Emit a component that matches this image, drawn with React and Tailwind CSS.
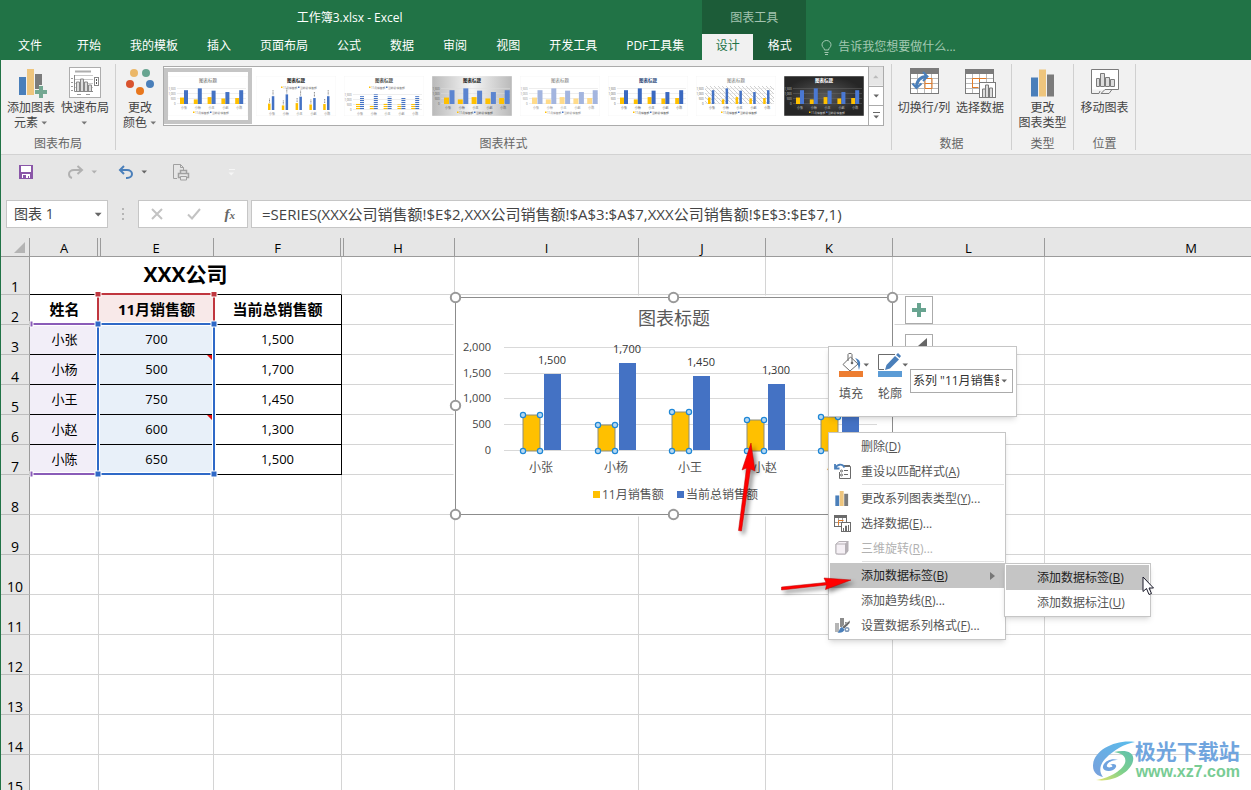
import { useState } from "react";

const people = [
  { name: "小张", nov: 700, total: 1500 },
  { name: "小杨", nov: 500, total: 1700 },
  { name: "小王", nov: 750, total: 1450 },
  { name: "小赵", nov: 600, total: 1300 },
  { name: "小陈", nov: 650, total: 1500 },
];

const tabs = ["开始", "我的模板", "插入", "页面布局", "公式", "数据", "审阅", "视图", "开发工具", "PDF工具集"];

const columns = [
  { name: "A", width: "w-[69px]", hiddenAfter: true },
  { name: "E", width: "w-[115px]" },
  { name: "F", width: "w-[128px]", hiddenAfter: true },
  { name: "H", width: "w-[113px]" },
  { name: "I", width: "w-[184px]" },
  { name: "J", width: "w-[127px]" },
  { name: "K", width: "w-[127px]" },
  { name: "L", width: "w-[152px]" },
  { name: "M", width: "w-[293px]" },
];

const thumbs = [
  { id: 1, title: "#666", text: "#777", a: "#ffc000", b: "#4472c4", bg: "#fff" },
  { id: 2, title: "#222", text: "#777", a: "#ffc000", b: "#4472c4", bg: "#fff", bold: true, top: true, tall: true, narrow: true },
  { id: 3, title: "#555", text: "#777", a: "url(#stripeA)", b: "url(#stripeB)", bg: "#fff", bold: true, top: true },
  { id: 4, title: "#222", text: "#555", a: "#ffc000", b: "#5b84d0", bg: "url(#silver)", bold: true, wide: true },
  { id: 5, title: "#777", text: "#888", a: "#ffdb8a", b: "#a3b5df", bg: "#fff", wide: true },
  { id: 6, title: "#2f4a7c", text: "#555", a: "#ffc000", b: "#3a68c0", bg: "#fff", bold: true },
  { id: 7, title: "#777", text: "#555", a: "#ffc000", b: "#4472c4", bg: "#fff", hatch: true, narrow: true },
  { id: 8, title: "#fff", text: "#ccc", a: "#ffc000", b: "#4a78d2", bg: "url(#coal)", bold: true },
];

function Caret({ className = "text-[#666]" }) {
  return (
    <svg width="7" height="4" viewBox="0 0 7 4" className={`inline-block shrink-0 ${className}`}>
      <path d="M0.5 0.5h5.5L3.25 3.5z" fill="currentColor" />
    </svg>
  );
}

function BarsIcon({ className }) {
  return (
    <svg viewBox="0 0 24 27" className={className}>
      <rect x="0" y="8" width="7" height="19" fill="#4a7fba" />
      <rect x="8" y="0" width="7" height="27" fill="#eec57d" />
      <rect x="16" y="5" width="7" height="22" fill="#7b7b7b" />
    </svg>
  );
}

function AddElementIcon() {
  return (
    <svg width="32" height="32" viewBox="0 0 32 32">
      <rect x="4" y="10" width="7" height="18" fill="#4a7fba" />
      <rect x="12" y="2" width="7" height="26" fill="#eec57d" />
      <path d="M20 7h7v11h-3v4h-4z" fill="#7b7b7b" />
      <path d="M24 19h4v4h4v4h-4v4h-4v-4h-4v-4h4z" fill="#74a892" />
    </svg>
  );
}

function QuickLayoutIcon() {
  return (
    <svg width="32" height="32" viewBox="0 0 32 32">
      <rect x="0.5" y="0.5" width="31" height="30" fill="#fff" stroke="#adadad" />
      <path d="M6 4.5h16" stroke="#adadad" strokeWidth="2" />
      <path d="M5 8.5h19M5 12.5h19M5 16.5h19M5 20.5h19" stroke="#c9c9c9" />
      <path d="M2 11.5h2M2 15.5h2M2 19.5h2M2 23.5h2M8 27.5h4M17 27.5h4" stroke="#999" />
      <path d="M5.5 8v16.5H24" stroke="#888" fill="none" />
      <path d="M7.5 24v-9h3v9M11.5 24v-12h3v12M15.5 24v-9h3v9M19.5 24v-6h3v6" fill="#ddd" stroke="#888" />
      <rect x="25.5" y="10.5" width="4" height="8" fill="#fff" stroke="#888" />
      <path d="M27 13h1M27 16h1" stroke="#555" strokeWidth="2" />
    </svg>
  );
}

function ColorsIcon() {
  return (
    <svg width="32" height="32" viewBox="0 0 32 32">
      <circle cx="10" cy="6" r="4" fill="#ebb768" />
      <circle cx="22" cy="6" r="4" fill="#68a490" />
      <circle cx="6" cy="17" r="4" fill="#d9532e" />
      <circle cx="26" cy="17" r="4" fill="#4a7fba" />
      <circle cx="16" cy="24" r="4" fill="#e8771d" />
    </svg>
  );
}

function SwitchIcon() {
  return (
    <svg width="32" height="32" viewBox="0 0 32 32">
      <rect x="2.5" y="2.5" width="28" height="24" fill="#fff" stroke="#7b7b7b" />
      <path d="M2 1h29v6H2z" fill="#7b7b7b" />
      <path d="M9.5 7v19M16.5 7v19M23.5 7v19M3 11.5h27M3 16.5h27M3 21.5h27" stroke="#b9b9b9" />
      <path d="M17 11.5h7v10h-7zM17 16.5h7" fill="none" stroke="#e07b29" />
      <path d="M8.5 20c0-6 4-10.5 10-10.5" fill="none" stroke="#4a7fba" strokeWidth="3" />
      <path d="M15 5l4.5 4.5L15 14M4.5 16.5l4 4.5 5-4.5" fill="none" stroke="#4a7fba" strokeWidth="2" />
    </svg>
  );
}

function SelectDataIcon() {
  return (
    <svg width="32" height="32" viewBox="0 0 32 32">
      <rect x="1.5" y="3.5" width="28" height="23" fill="#fff" stroke="#7b7b7b" />
      <path d="M1 2h29v5H1z" fill="#7b7b7b" />
      <path d="M8.5 7v19M15.5 7v19M22.5 7v19M2 11.5h27M2 16.5h27M2 21.5h27" stroke="#b9b9b9" />
      <path d="M8.5 21v-9.5h14M8.5 20.5h6M15.5 12v4" fill="none" stroke="#e07b29" />
      <rect x="15.5" y="15.5" width="16" height="15" fill="#fff" stroke="#7b7b7b" />
      <path d="M18.5 30v-8h3v8M21.5 30v-12h3v12M25.5 30v-9h3v9" fill="#ddd" stroke="#7b7b7b" />
    </svg>
  );
}

function SelectDataSmallIcon() {
  return (
    <svg width="17" height="17" viewBox="0 0 17 17">
      <rect x="0.5" y="1.5" width="12" height="10" fill="#fff" stroke="#6b6b6b" />
      <path d="M0 0h13v3H0z" fill="#6b6b6b" />
      <path d="M4.5 3v8M8.5 3v8M1 7.5h11" stroke="#999" />
      <path d="M4.5 10V5.5h5" fill="none" stroke="#e07b29" />
      <rect x="7.5" y="7.5" width="9" height="9" fill="#fff" stroke="#6b6b6b" />
      <path d="M9.5 16v-3M11.5 16v-5h1v5M14.5 16v-6" fill="none" stroke="#6b6b6b" />
    </svg>
  );
}

function MoveChartIcon() {
  return (
    <svg width="32" height="32" viewBox="0 0 32 32">
      <path d="M2.5 26.5v-24h27v20h-27z" fill="#fff" />
      <path d="M10 26.5H2.5v-24h27v20H22M10 26.5l1-2.5M12 26.5l4-4h7l-3 4z" fill="none" stroke="#7b7b7b" />
      <path d="M7.5 19.5v-8h3v8zM11.5 19.5v-13h4v13zM16.5 19.5v-9h4v9zM21.5 19.5v-7h4v7z" fill="#ddd" stroke="#7b7b7b" />
    </svg>
  );
}

function Thumbnail({ style }) {
  const base = style.top ? 34 : 28;
  const scale = 0.0092;
  const barWidth = style.wide ? 5 : style.narrow ? 2.5 : 4;
  return (
    <svg width="80" height="40" viewBox="0 0 80 40">
      <defs>
        <linearGradient id="silver">
          <stop offset="0" stopColor="#b9b9b9" />
          <stop offset="0.5" stopColor="#f6f6f6" />
          <stop offset="1" stopColor="#b9b9b9" />
        </linearGradient>
        <radialGradient id="coal">
          <stop offset="0" stopColor="#585858" />
          <stop offset="1" stopColor="#262626" />
        </radialGradient>
        <pattern id="stripeA" width="4" height="2" patternUnits="userSpaceOnUse">
          <path d="M0 0.5h4" stroke="#ffc000" strokeWidth="1.2" />
        </pattern>
        <pattern id="stripeB" width="4" height="2" patternUnits="userSpaceOnUse">
          <path d="M0 0.5h4" stroke="#4472c4" strokeWidth="1.2" />
        </pattern>
        <pattern id="hatch" width="4" height="4" patternUnits="userSpaceOnUse">
          <path d="M0 0l4 4" stroke="#bbb" strokeWidth="0.7" />
        </pattern>
      </defs>
      <rect width="80" height="40" fill={style.bg} stroke="#eee" strokeWidth="0.5" />
      <text x="40" y="6" textAnchor="middle" fontSize="4.5" fontWeight={style.bold ? 700 : 400} fill={style.title}>
        图表标题
      </text>
      {style.hatch && <rect x="9" y="10" width="69" height="18" fill="url(#hatch)" />}
      {!style.tall && [0, 1, 2, 3].map((n) => (
        <path key={n} d={`M9 ${base - n * 5 - 0.5}h69`} stroke={style.id === 8 ? "#666" : "#ddd"} strokeWidth="0.5" />
      ))}
      {!style.tall && ["0", "500", "1,000", "1,500"].map((label, n) => (
        <text key={label} x="7.5" y={base - n * 5 + 1} textAnchor="end" fontSize="2.8" fill={style.text}>{label}</text>
      ))}
      {people.map((p, i) => {
        const x = 12 + i * 13.8;
        const second = x + (style.narrow ? 3.8 : barWidth + (style.wide ? 0.5 : 0));
        return (
          <g key={p.name}>
            <rect x={x} y={base - p.nov * scale} width={barWidth} height={p.nov * scale} fill={style.a} />
            <rect x={second} y={base - p.total * scale} width={barWidth} height={p.total * scale} fill={style.b} />
            <text x={x + 4} y={base + 4.5} textAnchor="middle" fontSize="3" fill={style.text}>{p.name}</text>
            {style.tall && <path d={`M${x + 1.5} ${base - p.nov * scale - 5}v4M${x + 5} ${base - p.total * scale - 6}v5`} stroke="#888" strokeWidth="1" strokeDasharray="1 0.5" />}
          </g>
        );
      })}
      <g fontSize="2.8" fill={style.text} transform={style.top ? "translate(0 -25)" : undefined}>
        <rect x="25" y="35.5" width="1.5" height="1.5" fill="#ffc000" />
        <text x="27" y="37.5">11月销售额</text>
        <rect x="42" y="35.5" width="1.5" height="1.5" fill="#4472c4" />
        <text x="44" y="37.5">当前总销售额</text>
      </g>
    </svg>
  );
}

function RibbonGroup({ label, children, className = "" }) {
  return (
    <section className="my-1 flex shrink-0 flex-col border-r border-[#d0d0d0]">
      <div className={`flex flex-1 justify-center ${className}`}>{children}</div>
      <h2 className="h-3 text-center text-xs leading-3 text-[#666]">{label}</h2>
    </section>
  );
}

function RibbonButton({ icon, width = "w-[54px]", children }) {
  return (
    <button className={`flex h-[70px] flex-col items-center gap-px pt-[3px] text-xs leading-[15px] whitespace-nowrap text-[#444] hover:bg-[#d5d5d5] ${width}`}>
      {icon}
      <span>{children}</span>
    </button>
  );
}

function Header() {
  return (
    <header className="flex h-[60px] shrink-0 bg-[#217346] text-xs text-white">
      <div className="flex flex-col">
        <h1 className="h-9 text-center leading-9">工作簿3.xlsx - Excel</h1>
        <nav className="flex h-6 gap-px whitespace-nowrap">
          <button className="pr-5 pl-[17px] pb-1">文件</button>
          {tabs.map((tab) => (
            <button key={tab} className="px-[14px] pb-1">{tab}</button>
          ))}
        </nav>
      </div>
      <div className="ml-1 flex w-[104px] flex-col bg-[#1c5c38]">
        <p className="h-[34px] text-center leading-9 text-[#a3c3b0]">图表工具</p>
        <nav className="flex h-[26px]">
          <button className="w-[51px] bg-[#f1f1f1] pb-[2px] text-[#217346]">设计</button>
          <button className="flex-1 pb-[2px]">格式</button>
        </nav>
      </div>
      <label className="ml-[15px] flex items-center gap-[6px] self-end pb-[5px]">
        <svg width="11" height="15" viewBox="0 0 11 15" fill="none" stroke="#a3c9b2">
          <path d="M3.5 10C3.5 8 1 7.5 1 4.8A4.5 4.3 0 0 1 10 4.8C10 7.5 7.5 8 7.5 10zM3.5 12.5h4M4 14.5h3" />
        </svg>
        <input
          aria-label="告诉我您想要做什么"
          placeholder="告诉我您想要做什么..."
          className="h-4 w-[130px] bg-transparent outline-none placeholder:text-[#a3c9b2]"
        />
      </label>
    </header>
  );
}

function Ribbon() {
  const [selected, setSelected] = useState(1);
  return (
    <div className="flex h-[95px] shrink-0 border-b border-[#d2d2d2] bg-[#f1f1f1]">
      <RibbonGroup label="图表布局" className="px-[3px]">
        <RibbonButton icon={<AddElementIcon />}>
          添加图表
          <br />
          元素 <Caret className="mb-[2px] text-[#777]" />
        </RibbonButton>
        <RibbonButton icon={<QuickLayoutIcon />}>
          快速布局
          <br />
          <Caret className="mb-[2px] text-[#777]" />
        </RibbonButton>
      </RibbonGroup>
      <RibbonGroup label="图表样式" className="pr-[7px] pl-px">
        <RibbonButton icon={<ColorsIcon />} width="w-[46px]">
          <span className="block text-center">更改</span>
          颜色 <Caret className="mb-[2px] text-[#777]" />
        </RibbonButton>
        <div className="mt-[2px] flex h-[60px] border border-[#ababab] bg-white">
          {thumbs.map((style) => (
            <button
              key={style.id}
              aria-label={`样式 ${style.id}`}
              onClick={() => setSelected(style.id)}
              className={`my-px flex w-[88px] items-center justify-center border-4 ${selected === style.id ? "border-[#c5c5c5]" : "border-transparent"}`}
            >
              <Thumbnail style={style} />
            </button>
          ))}
          <div className="flex w-[15px] flex-col border-l border-[#ababab]">
            <button aria-label="向上" className="flex flex-1 rotate-180 items-center justify-center bg-[#e6e6e6]"><Caret className="text-[#bbb]" /></button>
            <button aria-label="向下" className="flex flex-1 items-center justify-center border-y border-[#ababab]"><Caret /></button>
            <button aria-label="其他" className="flex flex-1 flex-col items-center justify-center gap-[2px]">
              <span className="h-px w-[7px] bg-[#666]"></span>
              <Caret />
            </button>
          </div>
        </div>
      </RibbonGroup>
      <RibbonGroup label="数据" className="pr-[3px] pl-1">
        <RibbonButton icon={<SwitchIcon />} width="w-14">切换行/列</RibbonButton>
        <RibbonButton icon={<SelectDataIcon />} width="w-14">选择数据</RibbonButton>
      </RibbonGroup>
      <RibbonGroup label="类型" className="px-[3px]">
        <RibbonButton icon={<BarsIcon className="my-[2px] h-7 w-6" />} width="w-[55px]">
          <span className="block text-center">更改</span>
          图表类型
        </RibbonButton>
      </RibbonGroup>
      <RibbonGroup label="位置" className="px-[3px]">
        <RibbonButton icon={<MoveChartIcon />} width="w-[55px]">移动图表</RibbonButton>
      </RibbonGroup>
    </div>
  );
}

function QuickAccess() {
  return (
    <div className="flex h-[34px] shrink-0 items-center pl-[18px]">
      <button aria-label="保存">
        <svg width="14" height="14" viewBox="0 0 14 14">
          <path d="M0 0h14v14H0z" fill="#8a57a8" />
          <path d="M2 1h10v6H2zM3 9h8v4H3z" fill="#fff" />
          <path d="M4 10h3v3H4zM9 11h1v2H9z" fill="#8a57a8" />
        </svg>
      </button>
      <button aria-label="恢复" className="ml-[35px] flex items-center gap-[7px]">
        <svg width="16" height="14" viewBox="0 0 16 14" fill="none" stroke="#b1b1b1" strokeWidth="2">
          <path d="M9.5 1l4.5 4-4.5 4M14 5H6C3 5 1 7 1 9s1 3.500 3 4" />
        </svg>
        <Caret className="text-[#b1b1b1]" />
      </button>
      <button aria-label="撤消" className="ml-5 flex items-center gap-[7px]">
        <svg width="16" height="14" viewBox="0 0 16 14" fill="none" stroke="#4a7fba" strokeWidth="2">
          <path d="M6 1L2 5l4 4M2 5h7c3 0 5 2 5 4s-2 4-5 4H8" />
        </svg>
        <Caret />
      </button>
      <button aria-label="打印预览和打印" className="ml-[25px]">
        <svg width="17" height="17" viewBox="0 0 17 17" fill="none" stroke="#a0a0a0">
          <path d="M4 14.5H0.5v-14h7l3 3V6M7.5 0.5v3h3" />
          <path d="M7.5 9.5v-3h6v3M5.5 9.5h10v4h-10z" strokeWidth="1.5" />
          <path d="M7.5 12.5h6v3.5h-6z" fill="#e6e6e6" />
        </svg>
      </button>
      <button aria-label="自定义快速访问工具栏" className="ml-[38px] flex flex-col items-center gap-[2px]">
        <span className="h-px w-[6px] bg-[#f6f6f6]"></span>
        <Caret className="text-[#f6f6f6]" />
      </button>
    </div>
  );
}

function FormulaBar() {
  const [name, setName] = useState("图表 1");
  const [formula, setFormula] = useState("=SERIES(XXX公司销售额!$E$2,XXX公司销售额!$A$3:$A$7,XXX公司销售额!$E$3:$E$7,1)");
  return (
    <div className="flex h-[49px] shrink-0 pt-[11px] pb-[10px] pl-[5px]">
      <div className="flex w-[102px] items-center border border-[#c6c6c6] bg-white pr-1 pl-[7px]">
        <input
          aria-label="名称框"
          value={name}
          onChange={(e) => setName(e.target.value)}
          className="min-w-0 flex-1 text-sm text-[#444] outline-none"
        />
        <button aria-label="打开名称列表" className="flex"><Caret className="h-[5px] w-[9px] text-[#666]" /></button>
      </div>
      <div className="flex w-[30px] flex-col items-center justify-center gap-[3px]">
        <span className="h-[2px] w-[2px] bg-[#b5b5b5]"></span>
        <span className="h-[2px] w-[2px] bg-[#b5b5b5]"></span>
        <span className="h-[2px] w-[2px] bg-[#b5b5b5]"></span>
      </div>
      <div className="mr-[3px] flex w-[110px] items-center justify-around border border-[#c6c6c6] bg-white">
        <button aria-label="取消">
          <svg width="12" height="12" viewBox="0 0 12 12" stroke="#c3c3c3" strokeWidth="2"><path d="M1 1l10 10M11 1L1 11" /></svg>
        </button>
        <button aria-label="输入">
          <svg width="14" height="12" viewBox="0 0 14 12" fill="none" stroke="#c3c3c3" strokeWidth="2"><path d="M1 6.5l4 4L13 1" /></svg>
        </button>
        <button aria-label="插入函数" className="font-['Liberation_Serif',serif] text-[15px] leading-4 font-bold text-[#666] italic">
          f<span className="text-[11px]">x</span>
        </button>
      </div>
      <input
        aria-label="编辑栏"
        value={formula}
        onChange={(e) => setFormula(e.target.value)}
        className="min-w-0 flex-1 border border-r-0 border-[#c6c6c6] bg-white pl-[10px] text-[15px] text-[#444] outline-none"
      />
    </div>
  );
}

const corner = "border-r border-b border-[#9b9b9b]";
const rowHead = "border-r border-b border-r-[#9b9b9b] border-b-[#bdbdbd] bg-[#e6e6e6] p-0 align-bottom text-center font-normal text-sm leading-[15px]";
const blank = "border-r border-b border-[#d4d4d4] p-0";

function BlankCells({ count }) {
  return Array.from({ length: count }, (_, i) => <td key={i} className={blank}></td>);
}

function Grid() {
  return (
    <table className="w-[1337px] table-fixed border-separate border-spacing-0 text-black">
      <colgroup>
        <col className="w-[29px]" />
        {columns.map((c) => <col key={c.name} className={c.width} />)}
      </colgroup>
      <thead className="bg-[#e6e6e6]">
        <tr className="h-[19px]">
          <th className={`${corner} p-0`} aria-label="全选">
            <svg width="11" height="11" viewBox="0 0 11 11" className="mr-1 ml-auto"><path d="M11 0v11H0z" fill="#b4b4b4" /></svg>
          </th>
          {columns.map((c) => (
            <th key={c.name} className={`${corner} relative p-0 pt-[2px] text-[13px] leading-4 font-normal`}>
              {c.name}
              {c.hiddenAfter && <span className="absolute top-0 -right-[3px] bottom-0 z-10 w-1 border-x border-[#9b9b9b] bg-[#e6e6e6]"></span>}
            </th>
          ))}
        </tr>
      </thead>
      <tbody>
        <tr className="h-[38px]">
          <th className={rowHead}>1</th>
          <td colSpan={3} className="border-r border-b border-r-[#d4d4d4] border-b-black p-0 pb-1 text-center text-[21px] leading-7 font-bold">XXX公司</td>
          <BlankCells count={6} />
        </tr>
        <tr className="h-[30px] text-center text-[15px] leading-5 font-bold">
          <th className={rowHead}>2</th>
          <td className="border-b border-black p-0 pb-[2px]">姓名</td>
          <td className="border-b border-black bg-[#f8e9e9] p-0 pb-[2px]">11月销售额</td>
          <td className="border-r border-b border-black p-0 pb-[2px]">当前总销售额</td>
          <BlankCells count={6} />
        </tr>
        {people.map((p, i) => (
          <tr key={p.name} className="h-[30px] text-center text-[13px] leading-5">
            <th className={rowHead}>{i + 3}</th>
            <td className="border-b border-black bg-[#f2eef8] p-0 pb-[2px]">{p.name}</td>
            <td className="border-b border-black bg-[#e8f0f9] p-0 pb-[2px]">{p.nov}</td>
            <td className="border-r border-b border-black p-0 pb-[2px]">{p.total.toLocaleString("en-US")}</td>
            <BlankCells count={6} />
          </tr>
        ))}
        {[8, 9, 10, 11, 12, 13, 14, 15].map((n) => (
          <tr key={n} className="h-10">
            <th className={rowHead}>{n}</th>
            <BlankCells count={9} />
          </tr>
        ))}
      </tbody>
    </table>
  );
}

// coloured outlines around the ranges that feed the chart
function RangeOutlines() {
  return (
    <svg width="190" height="188" viewBox="0 0 190 188" className="pointer-events-none absolute top-[54px] left-7">
      <path d="M178 63h5v5zM178 123h5v5z" fill="#e01010" />
      <g fill="none" strokeWidth="2">
        <path d="M1 32h68M1 182h68" stroke="#fff" strokeWidth="4" />
        <path d="M1 32h68M1 182h68" stroke="#8a5cb8" />
        <path d="M69 31V2h116v29" stroke="#c0363f" />
        <rect x="69" y="32" width="116" height="150" stroke="#fff" strokeWidth="4" />
        <rect x="69" y="32" width="116" height="150" stroke="#2f69c7" />
      </g>
      <path d="M1 29h3v6H1zM1 179h3v6H1z" fill="#8a5cb8" stroke="#fff" />
      {[69, 185].map((x) => (
        <g key={x} stroke="#fff">
          <rect x={x - 3} y="-1" width="6" height="6" fill="#c0363f" />
          <rect x={x - 3} y="29" width="6" height="6" fill="#2f69c7" />
          <rect x={x - 3} y="179" width="6" height="6" fill="#2f69c7" />
        </g>
      ))}
    </svg>
  );
}

function Chart() {
  const base = 159.5;
  const scale = 0.0512;
  return (
    <svg width="450" height="230" viewBox="0 0 450 230" className="absolute top-[53px] left-[448px]" role="img" aria-label="图表标题">
      <rect x="6" y="6" width="438" height="218" fill="#fff" stroke="#fff" strokeWidth="3" />
      <rect x="6.5" y="6.5" width="437" height="217" fill="none" stroke="#8c8c8c" />
      <text x="225" y="34" textAnchor="middle" fontSize="18" fill="#595959">图表标题</text>
      {[0, 500, 1000, 1500, 2000].map((v) => {
        const y = Math.round(base - v * scale) - 0.5;
        return (
          <g key={v}>
            <path d={`M55 ${y}h373`} stroke="#d9d9d9" />
            <text x="42" y={y + 3} textAnchor="end" fontSize="11" fill="#444">{v.toLocaleString("en-US")}</text>
          </g>
        );
      })}
      {people.map((p, i) => {
        const x = Math.round(i * 74.6);
        const top = Math.round(base - p.nov * scale);
        const totalTop = Math.round(base - p.total * scale);
        return (
          <g key={p.name}>
            <rect x={x + 95} y={totalTop} width="17" height={159 - totalTop} fill="#4472c4" />
            <rect x={x + 74} y={top} width="17" height={160 - top} fill="#ffc000" stroke="#8d8d7a" />
            {[[74, top], [91, top], [74, 160], [91, 160]].map(([dx, y]) => (
              <circle key={`${dx}-${y}`} cx={x + dx} cy={y} r="2.6" fill="#b5d8f2" stroke="#1e87d6" strokeWidth="1.2" />
            ))}
            <text x={x + 103} y={totalTop - 10} textAnchor="middle" fontSize="11" fill="#333">{p.total.toLocaleString("en-US")}</text>
            <text x={x + 92} y="181" textAnchor="middle" fontSize="12" fill="#555">{p.name}</text>
          </g>
        );
      })}
      <g fontSize="12" fill="#555">
        <rect x="144" y="200" width="7" height="7" fill="#ffc000" />
        <text x="153" y="208">11月销售额</text>
        <rect x="228" y="200" width="7" height="7" fill="#4472c4" />
        <text x="237" y="208">当前总销售额</text>
      </g>
      {[[6, 6], [224, 6], [443, 6], [6, 114], [443, 114], [6, 223], [224, 223], [443, 223]].map(([x, y]) => (
        <circle key={`${x}-${y}`} cx={x + 0.5} cy={y + 0.5} r="4.7" fill="#fff" stroke="#999" strokeWidth="2" />
      ))}
    </svg>
  );
}

function ChartButtons() {
  return (
    <div className="absolute top-[58px] left-[904px] flex flex-col gap-[10px]">
      <button aria-label="图表元素" className="flex h-7 w-7 items-center justify-center border border-[#ababab] bg-white">
        <svg width="14" height="14" viewBox="0 0 14 14"><path d="M5 0h4v5h5v4H9v5H5V9H0V5h5z" fill="#68a490" /></svg>
      </button>
      <button aria-label="图表样式" className="flex h-7 w-7 items-center justify-center border border-[#ababab] bg-white">
        <svg width="18" height="20" viewBox="0 0 18 20"><path d="M17 0v8l-5 2-4-2z" fill="#666" /><path d="M7 9l3 3c-2 5-5 4-8 5 2-3 1-7 5-8z" fill="#4a7fba" /></svg>
      </button>
    </div>
  );
}

function MiniToolbar() {
  return (
    <div className="absolute top-[108px] left-[827px] flex h-[71px] w-[189px] border border-[#c6c6c6] bg-white pl-[10px] text-xs text-[#555] shadow-md">
      <button className="flex w-[31px] flex-col items-start pt-[5px]">
        <span className="flex items-center">
          <svg width="24" height="26" viewBox="1 0 24 26" className="shrink-0">
            <path d="M5 12.5L12.5 5l7.5 7-8 7z" fill="#fff" stroke="#6b6b6b" />
            <path d="M10 9V2.5C10 1 14 1 14 2.5V11" fill="none" stroke="#6b6b6b" />
            <circle cx="14" cy="11" r="1.3" fill="#6b6b6b" />
            <path d="M17 6c6 2 6 5 4 12-1-4-1-9-4-12z" fill="#4a7fba" />
            <path d="M1 19h24v6H1z" fill="#ed7d31" />
          </svg>
          <Caret />
        </span>
        <span className="mt-2">填充</span>
      </button>
      <button className="ml-2 flex w-[31px] flex-col items-start pt-[5px]">
        <span className="flex items-center">
          <svg width="24" height="26" viewBox="1 0 24 26" className="shrink-0">
            <path d="M7 17.5H1.5v-15H18" fill="none" stroke="#6b6b6b" />
            <path d="M8 18l1.5-5L18 4l4 3.5-9 9z" fill="#4a7fba" />
            <path d="M19 3l2-2 3 3-1.5 2z" fill="#4a7fba" />
            <path d="M1 19h24v6H1z" fill="#5b9bd5" />
          </svg>
          <Caret />
        </span>
        <span className="mt-2">轮廓</span>
      </button>
      <div className="relative mt-[22px] ml-px h-6 w-[103px] border border-[#ababab]">
        <select aria-label="图表元素" className="h-full w-[88px] appearance-none overflow-hidden pl-[2px] text-xs whitespace-nowrap text-[#333] outline-none">
          <option>系列 "11月销售额"</option>
          <option>系列 "当前总销售额"</option>
        </select>
        <Caret className="pointer-events-none absolute top-[9px] right-1 text-[#666]" />
      </div>
    </div>
  );
}

function ResetIcon() {
  return (
    <svg width="17" height="17" viewBox="0 0 17 17" fill="none">
      <path d="M10 3.5h6.5v12h-11V9" stroke="#6b6b6b" />
      <path d="M10 7.5h4M10 11.5h4" stroke="#6b6b6b" />
      <path d="M9 3h7" stroke="#6b6b6b" strokeWidth="2" />
      <circle cx="7.5" cy="8" r="1" stroke="#6b6b6b" />
      <circle cx="7.5" cy="12" r="1" stroke="#6b6b6b" />
      <path d="M1 1v4.5h4.5M1.5 5C3 1.5 8 0 10.5 4.5" stroke="#4a7fba" strokeWidth="1.8" />
    </svg>
  );
}

function CubeIcon() {
  return (
    <svg width="17" height="17" viewBox="0 0 17 17" stroke="#b5b0b5" strokeLinejoin="round">
      <path d="M2 4l3-2.5h9L11.5 4v10H2z" fill="#f5f0f5" />
      <path d="M11.5 4L14 1.5V11l-2.5 3z" fill="#b5b0b5" />
      <path d="M2 4h9.5v10h-8L2 12.5z" fill="#f5f0f5" />
    </svg>
  );
}

function FormatIcon() {
  return (
    <svg width="17" height="17" viewBox="0 0 17 17">
      <path d="M1 6h4v9H1z" fill="#b5b5b5" />
      <path d="M6 1h4v9H6zM11 5h3v4h-3z" fill="#8c8c8c" />
      <path d="M16 3v3l-6 6-2-2z" fill="#6b6b6b" stroke="#fff" strokeWidth="0.6" />
      <path d="M8 10l2.5 2.5C9.5 16 6 16 3.5 15.5 6 14 5 11 8 10z" fill="#4a7fba" />
      <circle cx="13" cy="12.5" r="1.8" fill="none" stroke="#7f99b8" strokeWidth="1.5" />
    </svg>
  );
}

function MenuItem({ icon, label, hotkey, more, active, disabled, submenu }) {
  const colors = active ? "bg-[#c5c5c5] text-[#222]" : disabled ? "text-[#b1b1b1]" : "text-[#555] hover:bg-[#c5c5c5]";
  return (
    <button role="menuitem" disabled={disabled} className={`flex h-[25px] w-full items-center whitespace-nowrap ${colors}`}>
      <span className="ml-1 w-[27px]">{icon}</span>
      {label}(<u>{hotkey}</u>){more && "..."}
      {submenu && (
        <svg width="5" height="8" viewBox="0 0 5 8" className="mr-[9px] ml-auto"><path d="M0 0l5 4-5 4z" fill="#777" /></svg>
      )}
    </button>
  );
}

function ContextMenu() {
  return (
    <>
      <div role="menu" className="absolute top-[194px] left-[827px] w-[178px] border border-[#c6c6c6] bg-white p-px text-xs shadow-md">
        <MenuItem label="删除" hotkey="D" />
        <MenuItem icon={<ResetIcon />} label="重设以匹配样式" hotkey="A" />
        <hr className="mb-px ml-8 border-[#e1e1e1]" />
        <MenuItem icon={<BarsIcon className="ml-px h-[15px] w-[14px]" />} label="更改系列图表类型" hotkey="Y" more />
        <MenuItem icon={<SelectDataSmallIcon />} label="选择数据" hotkey="E" more />
        <MenuItem icon={<CubeIcon />} label="三维旋转" hotkey="R" more disabled />
        <hr className="mb-px ml-8 border-[#e1e1e1]" />
        <MenuItem label="添加数据标签" hotkey="B" active submenu />
        <MenuItem label="添加趋势线" hotkey="R" more />
        <MenuItem icon={<FormatIcon />} label="设置数据系列格式" hotkey="F" more />
      </div>
      <div role="menu" className="absolute top-[325px] left-[1003px] w-[147px] border border-[#c6c6c6] bg-white p-px text-xs shadow-md">
        <button role="menuitem" className="block h-[25px] w-full bg-[#c5c5c5] pl-[31px] text-left text-[#222]">添加数据标签(<u>B</u>)</button>
        <button role="menuitem" className="block h-[25px] w-full pl-[31px] text-left text-[#555]">添加数据标注(<u>U</u>)</button>
      </div>
    </>
  );
}

function Pointers() {
  return (
    <>
      <svg width="85" height="165" viewBox="0 0 85 165" className="pointer-events-none absolute top-[197px] left-[732px] overflow-visible drop-shadow-[3px_3px_2px_rgba(0,0,0,0.45)]">
        <g fill="#f00" stroke="#b00" strokeWidth="0.5">
          <path d="M18 8L9 35l4.5-2L5.5 95.5l3 .5L17.5 34l4.5 2z" />
          <path d="M118 145l-27-2 2 4.5L48.5 152v3L93.5 150l-1 4.5z" />
        </g>
      </svg>
      <svg width="13" height="20" viewBox="0 0 13 20" className="pointer-events-none absolute top-[338px] left-[1141px]">
        <path d="M1 1v14.5l3.5-3 2.5 6 2.5-1-2.5-5.5h4.5z" fill="#fff" stroke="#1a1a2a" />
      </svg>
    </>
  );
}

function Watermark() {
  return (
    <a href="#" className="absolute right-[11px] bottom-2 flex items-center">
      <svg width="43" height="42" viewBox="0 0 43 42">
        <defs>
          <linearGradient id="swirlBlue" x1="0" y1="1" x2="1" y2="0">
            <stop offset="0" stopColor="#7aa0dc" />
            <stop offset="1" stopColor="#58bdec" />
          </linearGradient>
          <linearGradient id="swirlGreen" x1="0" y1="1" x2="1" y2="0">
            <stop offset="0" stopColor="#e6e36b" />
            <stop offset="0.5" stopColor="#7ed08b" />
            <stop offset="1" stopColor="#5fc0b0" />
          </linearGradient>
        </defs>
        <path d="M43 2C24-1 1 10 1 26c0 7 5 10 10 11-4-5-4-12 3-19C22 10 32 4 43 2z" fill="url(#swirlBlue)" />
        <path d="M22 12c12-3 21 0 19 9C39 31 22 43 4 40c11-1 26-9 29-17 2-7-4-10-11-11z" fill="url(#swirlGreen)" />
        <path d="M26 20c-8-3-16 3-15 8 1 4 11 4 13-1 1-3-3-4-6-2 3 0 3 2 1 2-2 1-5 0-4-2 1-3 6-5 11-5z" fill="#6fa3df" />
      </svg>
      <span className="flex flex-col font-bold">
        <span className="text-[21px] leading-[22px] text-[#70a5de]">极光下载站</span>
        <span className="pl-px font-['Liberation_Sans',sans-serif] text-base leading-5 text-[#78cc94]">www.xz7.com</span>
      </span>
    </a>
  );
}

export default function App() {
  return (
    <div className="relative flex h-screen flex-col overflow-hidden border-l border-[#217346] bg-[#e6e6e6] font-['Open_Sans','Noto_Sans_CJK_SC',sans-serif]">
      <Header />
      <Ribbon />
      <QuickAccess />
      <FormulaBar />
      <main className="relative min-h-0 flex-1 overflow-hidden bg-white">
        <Grid />
        <RangeOutlines />
        <Chart />
        <ChartButtons />
        <MiniToolbar />
        <ContextMenu />
        <Pointers />
      </main>
      <Watermark />
    </div>
  );
}
